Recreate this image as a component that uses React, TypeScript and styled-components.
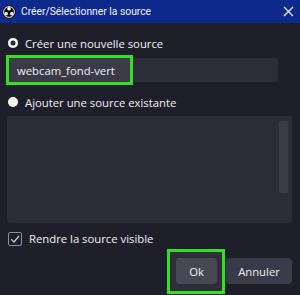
import React, { useState } from 'react'
import styled, { createGlobalStyle } from 'styled-components'

const GlobalStyle = createGlobalStyle`
	html, body {
		margin: 0;
		padding: 0;
		background: #1f1f29;
	}
	* {
		box-sizing: border-box;
	}
`

const StyledDialog = styled.div`
	width: 300px;
	height: 295px;
	display: flex;
	flex-direction: column;
	background-color: #1f1f29;
	color: #ffffff;
	font-family: "Open Sans", "Noto Sans", sans-serif;
	font-size: 11.3px;
	overflow: hidden;
`
const StyledTitleBar = styled.div`
	height: 23px;
	flex-shrink: 0;
	display: flex;
	align-items: center;
	padding: 0 6px 0 2px;
	gap: 5px;
	background-color: #0b2a8c;
	> span {
		flex-grow: 1;
		font-family: Roboto, "Noto Sans", sans-serif;
		font-size: 10.3px;
		color: #f2f4ff;
	}
`
const StyledClose = styled.button`
	border: none;
	background: none;
	padding: 0;
	display: flex;
	color: #e8ecff;
`
const StyledBody = styled.div`
	flex-grow: 1;
	display: flex;
	flex-direction: column;
	padding: 9px 8px 11px 7px;
`
const StyledOption = styled.label`
	display: flex;
	align-items: center;
	gap: 7px;
	height: 22px;
	padding-left: 1px;
	color: #f0f0f4;
`
const StyledRadio = styled.span<{ $checked: boolean }>`
	width: 10px;
	height: 10px;
	border-radius: 50%;
	background-color: #f4f4f6;
	box-shadow: ${p => (p.$checked ? 'inset 0 0 0 2.5px #f4f4f6, inset 0 0 0 5px #2a2b36' : 'none')};
`
const StyledInputRow = styled.div`
	position: relative;
	margin: 4px 14px 9px 2px;
`
const StyledInput = styled.input`
	width: 100%;
	height: 24px;
	border: none;
	outline: none;
	border-radius: 3px;
	background-color: #2c2d39;
	color: #eef0f6;
	font-family: inherit;
	font-size: 11.3px;
	padding: 0 8px;
`
const StyledHighlight = styled.div<{ $width: number; $height: number }>`
	position: absolute;
	left: -3px;
	top: -3px;
	width: ${p => p.$width}px;
	height: ${p => p.$height}px;
	border: 3px solid #35df24;
	background-color: rgba(255, 255, 255, 0.07);
	pointer-events: none;
`
const StyledList = styled.div`
	height: 107px;
	margin: 3px 0 0 0;
	display: flex;
	justify-content: flex-end;
	padding: 5px 4px;
	border-radius: 3px;
	background-color: #2b2c37;
`
const StyledScrollbar = styled.div`
	width: 9px;
	height: 72px;
	border-radius: 2px;
	background-color: #3b3c48;
`
const StyledCheckRow = styled.label`
	display: flex;
	align-items: center;
	gap: 7px;
	margin-top: 8px;
	padding-left: 1px;
	color: #f0f0f4;
`
const StyledCheckbox = styled.span`
	width: 14px;
	height: 14px;
	border: 1.5px solid #8c8d99;
	border-radius: 2px;
	display: flex;
	align-items: center;
	justify-content: center;
`
const StyledFooter = styled.div`
	margin-top: auto;
	display: flex;
	justify-content: flex-end;
	gap: 9px;
`
const StyledButtonWrap = styled.div`
	position: relative;
	display: flex;
`
const StyledButton = styled.button<{ $width: number }>`
	width: ${p => p.$width}px;
	height: 26px;
	border: none;
	border-radius: 4px;
	background-color: #3a3b48;
	color: #eceef4;
	font-family: inherit;
	font-size: 11.3px;
	padding: 0;
`

const ObsLogo = () => (
	<svg width="14" height="14" viewBox="0 0 24 24">
		<circle cx="12" cy="12" r="11.5" fill="#0e0e10" />
		<circle cx="12" cy="12" r="9.2" fill="none" stroke="#ffffff" strokeWidth="1.6" />
		<circle cx="12" cy="6.6" r="3" fill="#ffffff" />
		<circle cx="7.2" cy="15" r="3" fill="#ffffff" />
		<circle cx="16.8" cy="15" r="3" fill="#ffffff" />
	</svg>
)

const App = () => {
	const [name, setName] = useState<string>('webcam_fond-vert')
	const [mode, setMode] = useState<'new' | 'existing'>('new')

	return <>
		<GlobalStyle />
		<StyledDialog>
			<StyledTitleBar>
				<ObsLogo />
				<span>Créer/Sélectionner la source</span>
				<StyledClose>
					<svg width="11" height="11" viewBox="0 0 11 11">
						<path d="M1 1 L10 10 M10 1 L1 10" stroke="currentColor" strokeWidth="1.3" />
					</svg>
				</StyledClose>
			</StyledTitleBar>
			<StyledBody>
				<StyledOption onClick={() => setMode('new')}>
					<StyledRadio $checked={mode === 'new'} />
					Créer une nouvelle source
				</StyledOption>
				<StyledInputRow>
					<StyledInput value={name} onChange={e => setName(e.target.value)} />
					<StyledHighlight $width={127} $height={30} />
				</StyledInputRow>
				<StyledOption onClick={() => setMode('existing')}>
					<StyledRadio $checked={mode === 'existing'} />
					Ajouter une source existante
				</StyledOption>
				<StyledList>
					<StyledScrollbar />
				</StyledList>
				<StyledCheckRow>
					<StyledCheckbox>
						<svg width="10" height="10" viewBox="0 0 10 10">
							<path d="M1.2 5.2 L4 8 L9 2" fill="none" stroke="#c8c9d2" strokeWidth="1.2" />
						</svg>
					</StyledCheckbox>
					Rendre la source visible
				</StyledCheckRow>
				<StyledFooter>
					<StyledButtonWrap>
						<StyledButton $width={41}>Ok</StyledButton>
						<StyledHighlight $width={58} $height={45} style={{ left: -9, top: -9 }} />
					</StyledButtonWrap>
					<StyledButton $width={66}>Annuler</StyledButton>
				</StyledFooter>
			</StyledBody>
		</StyledDialog>
	</>
}

export default App
